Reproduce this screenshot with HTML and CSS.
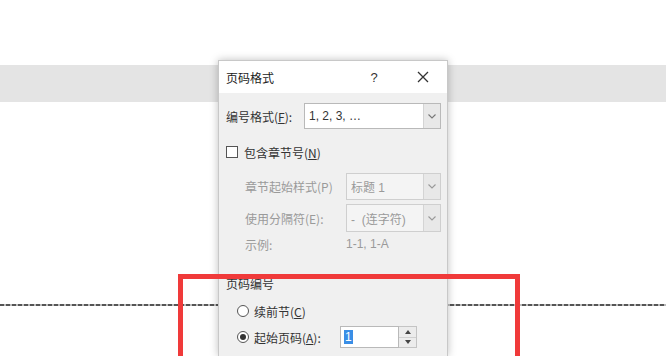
FILE: index.html
```html
<!DOCTYPE html>
<html lang="zh-CN">

<head>
    <meta charset="UTF-8">
    <meta name="viewport" content="width=device-width, initial-scale=1.0">
    <title>页码格式</title>
    <link rel="stylesheet" href="styles.css">
</head>

<body>
    <div class="page">
        <div class="ribbon-band"></div>
        <div class="header-line"></div>
    </div>

    <div class="dialog">
        <div class="dialog-title">
            <span class="title-text">页码格式</span>
            <span class="title-help">?</span>
            <span class="title-close">
                <svg width="12" height="12" viewBox="0 0 12 12">
                    <path d="M1 1 L11 11 M11 1 L1 11" stroke="#333" stroke-width="1.3" fill="none" />
                </svg>
            </span>
        </div>

        <div class="dialog-body">
            <div class="row row-main">
                <span class="label">编号格式(<u>F</u>):</span>
                <div class="select select-wide">
                    <span class="select-value">1, 2, 3, …</span>
                    <span class="select-arrow">
                        <svg width="8" height="5" viewBox="0 0 8 5">
                            <path d="M0.5 0.5 L4 4 L7.5 0.5" stroke="#777" stroke-width="1.1" fill="none" />
                        </svg>
                    </span>
                </div>
            </div>

            <div class="row row-check">
                <span class="checkbox"></span>
                <span class="label">包含章节号(<u>N</u>)</span>
            </div>

            <div class="row row-sub">
                <span class="label label-sub disabled">章节起始样式(P)</span>
                <div class="select select-narrow disabled">
                    <span class="select-value">标题 1</span>
                    <span class="select-arrow">
                        <svg width="8" height="5" viewBox="0 0 8 5">
                            <path d="M0.5 0.5 L4 4 L7.5 0.5" stroke="#999" stroke-width="1.1" fill="none" />
                        </svg>
                    </span>
                </div>
            </div>

            <div class="row row-sub row-sub2">
                <span class="label label-sub disabled">使用分隔符(E):</span>
                <div class="select select-narrow disabled">
                    <span class="select-value">-&nbsp;&nbsp;(连字符)</span>
                    <span class="select-arrow">
                        <svg width="8" height="5" viewBox="0 0 8 5">
                            <path d="M0.5 0.5 L4 4 L7.5 0.5" stroke="#999" stroke-width="1.1" fill="none" />
                        </svg>
                    </span>
                </div>
            </div>

            <div class="row row-example">
                <span class="label label-sub disabled">示例:</span>
                <span class="example-value disabled">1-1, 1-A</span>
            </div>

            <div class="group-label">页码编号</div>

            <div class="row row-radio">
                <span class="radio"></span>
                <span class="label">续前节(<u>C</u>)</span>
            </div>

            <div class="row row-radio row-radio2">
                <span class="radio checked"></span>
                <span class="label label-radio">起始页码(<u>A</u>):</span>
                <div class="spin">
                    <span class="spin-input"><span class="spin-sel">1</span></span>
                    <span class="spin-buttons">
                        <span class="spin-btn">
                            <svg width="6" height="4" viewBox="0 0 6 4"><path d="M0 4 L3 0 L6 4 Z" fill="#444" /></svg>
                        </span>
                        <span class="spin-btn">
                            <svg width="6" height="4" viewBox="0 0 6 4"><path d="M0 0 L3 4 L6 0 Z" fill="#444" /></svg>
                        </span>
                    </span>
                </div>
            </div>
        </div>
    </div>

    <div class="highlight"></div>
</body>

</html>
```

FILE: styles.css
```css
* {
    margin: 0;
    padding: 0;
    box-sizing: border-box;
}

body {
    width: 666px;
    height: 356px;
    overflow: hidden;
    background: #fff;
    font-family: "Noto Sans CJK SC", "Liberation Sans", sans-serif;
    font-size: 12px;
    color: #333;
    position: relative;
}

u {
    text-decoration: underline;
}

.page {
    padding-top: 65px;
}

.ribbon-band {
    height: 37px;
    background: #e4e4e4;
}

.header-line {
    margin-top: 202px;
    height: 2px;
    background: repeating-linear-gradient(90deg, #555 0 4px, #bbb 4px 6px);
}

/* dialog window on top of the document */
.dialog {
    position: absolute;
    left: 218px;
    top: 60px;
    width: 230px;
    height: 296px;
    background: #f0f0f0;
    border: 1px solid #c8c8c8;
    border-bottom: none;
    box-shadow: 0 0 8px rgba(0, 0, 0, 0.25);
}

.dialog-title {
    height: 32px;
    background: #fff;
    display: flex;
    align-items: center;
    padding-left: 7px;
}

.title-text {
    flex: 1;
    color: #222;
}

.title-help {
    width: 50px;
    text-align: center;
    font-family: "Liberation Sans", sans-serif;
    font-size: 13px;
    color: #333;
}

.title-close {
    width: 48px;
    display: flex;
    align-items: center;
    justify-content: center;
}

.dialog-body {
    padding: 10px 6px 0 7px;
}

.row {
    display: flex;
    align-items: center;
}

.row-main {
    height: 26px;
}

.row-main .label {
    width: 78px;
}

.select {
    height: 100%;
    display: flex;
    background: #fff;
    border: 1px solid #b9b9b9;
}

.select-wide {
    width: 137px;
}

.select-narrow {
    width: 95px;
    background: #f4f4f4;
    border-color: #cfcfcf;
}

.select-value {
    flex: 1;
    padding-left: 4px;
    display: flex;
    align-items: center;
    font-family: "Liberation Sans", "Noto Sans CJK SC", sans-serif;
}

.select-arrow {
    width: 17px;
    display: flex;
    align-items: center;
    justify-content: center;
    border-left: 1px solid #d4d4d4;
    background: #e8e8e8;
}

.row-check {
    margin-top: 12px;
    height: 22px;
}

.checkbox {
    width: 12px;
    height: 12px;
    border: 1px solid #555;
    background: #fff;
    margin-right: 6px;
}

.row-sub {
    margin-top: 10px;
    height: 27px;
}

.row-sub2 {
    margin-top: 4px;
    height: 28px;
}

.label-sub {
    padding-left: 19px;
    width: 120px;
}

.disabled {
    color: #9a9a9a;
}

.row-example {
    margin-top: 4px;
    height: 16px;
}

.example-value {
    font-family: "Liberation Sans", sans-serif;
}

.group-label {
    margin-top: 24px;
    height: 16px;
    line-height: 16px;
    color: #333;
}

.row-radio {
    margin-top: 9px;
    height: 20px;
    padding-left: 11px;
}

.radio {
    width: 12px;
    height: 12px;
    border: 1px solid #555;
    border-radius: 50%;
    background: #fff;
    margin-right: 5px;
    display: flex;
    align-items: center;
    justify-content: center;
}

.radio.checked::after {
    content: "";
    width: 6px;
    height: 6px;
    border-radius: 50%;
    background: #333;
}

.row-radio2 {
    margin-top: 5px;
    height: 22px;
}

.label-radio {
    width: 86px;
}

.spin {
    display: flex;
    height: 22px;
}

.spin-input {
    width: 59px;
    background: #fff;
    border: 1px solid #b9b9b9;
    display: flex;
    align-items: center;
    padding-left: 3px;
}

.spin-sel {
    background: #3a8ee6;
    color: #fff;
    font-family: "Liberation Sans", sans-serif;
    padding: 0 1px;
    line-height: 14px;
}

.spin-buttons {
    width: 18px;
    display: flex;
    flex-direction: column;
    border: 1px solid #c4c4c4;
    border-left: none;
    background: #ececec;
}

.spin-btn {
    flex: 1;
    display: flex;
    align-items: center;
    justify-content: center;
}

.spin-btn + .spin-btn {
    border-top: 1px solid #d0d0d0;
}

/* red annotation frame, runs off the bottom of the shot */
.highlight {
    position: absolute;
    left: 178px;
    top: 274px;
    width: 342px;
    height: 82px;
    border: 5px solid #f03a3a;
    border-bottom: none;
}
```
